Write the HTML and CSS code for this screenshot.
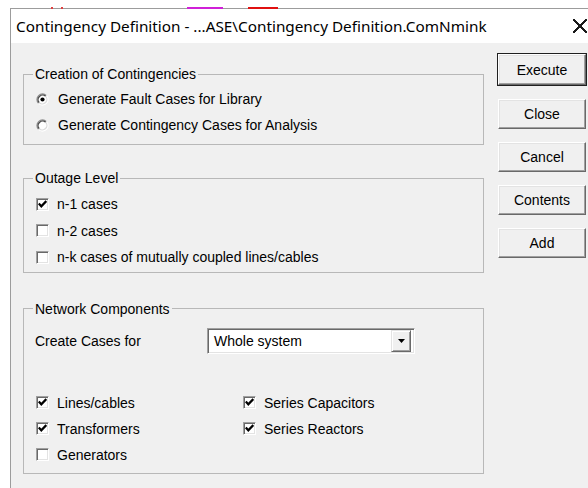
FILE: index.html
```html
<!DOCTYPE html>
<html lang="en">
<head>
<meta charset="utf-8">
<title>Contingency Definition</title>
<link rel="stylesheet" href="styles.css">
</head>
<body>
<div class="desk">
  <span class="mark mark-tick" style="left:51px"></span>
  <span class="mark mark-tick" style="left:61px"></span>
  <span class="mark mark-magenta"></span>
  <span class="mark mark-red"></span>

  <div class="window">
    <div class="titlebar">
      <span class="title">Contingency Definition - ...ASE\Contingency Definition.ComNmink</span>
      <span class="close-btn"><span class="close-cross" aria-label="Close"></span></span>
    </div>

    <div class="client">
      <div class="groups">
        <fieldset class="group group-creation">
          <legend>Creation of Contingencies</legend>
          <div class="row">
            <svg class="radio" width="13" height="13" viewBox="0 0 13 13">
              <circle cx="6.5" cy="6.5" r="5.5" fill="#ffffff"/>
              <path d="M2.61 10.39 A5.5 5.5 0 0 1 10.39 2.61" fill="none" stroke="#8f8f8f" stroke-width="1.3"/>
              <path d="M10.39 2.61 A5.5 5.5 0 0 1 2.61 10.39" fill="none" stroke="#ffffff" stroke-width="1.3"/>
              <path d="M3.32 9.68 A4.5 4.5 0 0 1 9.68 3.32" fill="none" stroke="#4a4a4a" stroke-width="1.3"/>
              <path d="M9.68 3.32 A4.5 4.5 0 0 1 3.32 9.68" fill="none" stroke="#dcdcdc" stroke-width="1.3"/>
              <circle cx="6.5" cy="6.5" r="2.1" fill="#000000"/>
            </svg>
            <span class="label">Generate Fault Cases for Library</span>
          </div>
          <div class="row">
            <svg class="radio" width="13" height="13" viewBox="0 0 13 13">
              <circle cx="6.5" cy="6.5" r="5.5" fill="#ffffff"/>
              <path d="M2.61 10.39 A5.5 5.5 0 0 1 10.39 2.61" fill="none" stroke="#8f8f8f" stroke-width="1.3"/>
              <path d="M10.39 2.61 A5.5 5.5 0 0 1 2.61 10.39" fill="none" stroke="#ffffff" stroke-width="1.3"/>
              <path d="M3.32 9.68 A4.5 4.5 0 0 1 9.68 3.32" fill="none" stroke="#4a4a4a" stroke-width="1.3"/>
              <path d="M9.68 3.32 A4.5 4.5 0 0 1 3.32 9.68" fill="none" stroke="#dcdcdc" stroke-width="1.3"/>
            </svg>
            <span class="label">Generate Contingency Cases for Analysis</span>
          </div>
        </fieldset>

        <fieldset class="group group-outage">
          <legend>Outage Level</legend>
          <div class="row">
            <span class="chk"><svg width="9" height="9" viewBox="0 0 9 9"><path d="M0.8 3.6 L3.3 6.3 L8.3 1.1" stroke="#000" stroke-width="2.2" fill="none"/></svg></span>
            <span class="label">n-1 cases</span>
          </div>
          <div class="row">
            <span class="chk"></span>
            <span class="label">n-2 cases</span>
          </div>
          <div class="row">
            <span class="chk"></span>
            <span class="label">n-k cases of mutually coupled lines/cables</span>
          </div>
        </fieldset>

        <fieldset class="group group-network">
          <legend>Network Components</legend>
          <div class="create-row">
            <span class="create-label">Create Cases for</span>
            <div class="combo">
              <span class="combo-text">Whole system</span>
              <span class="combo-btn"><svg width="7" height="4" viewBox="0 0 7 4"><path d="M0 0 H7 L3.5 4 Z" fill="#000"/></svg></span>
            </div>
          </div>
          <div class="comp-grid">
            <div class="row">
              <span class="chk"><svg width="9" height="9" viewBox="0 0 9 9"><path d="M0.8 3.6 L3.3 6.3 L8.3 1.1" stroke="#000" stroke-width="2.2" fill="none"/></svg></span>
              <span class="label">Lines/cables</span>
            </div>
            <div class="row">
              <span class="chk"><svg width="9" height="9" viewBox="0 0 9 9"><path d="M0.8 3.6 L3.3 6.3 L8.3 1.1" stroke="#000" stroke-width="2.2" fill="none"/></svg></span>
              <span class="label">Series Capacitors</span>
            </div>
            <div class="row">
              <span class="chk"><svg width="9" height="9" viewBox="0 0 9 9"><path d="M0.8 3.6 L3.3 6.3 L8.3 1.1" stroke="#000" stroke-width="2.2" fill="none"/></svg></span>
              <span class="label">Transformers</span>
            </div>
            <div class="row">
              <span class="chk"><svg width="9" height="9" viewBox="0 0 9 9"><path d="M0.8 3.6 L3.3 6.3 L8.3 1.1" stroke="#000" stroke-width="2.2" fill="none"/></svg></span>
              <span class="label">Series Reactors</span>
            </div>
            <div class="row">
              <span class="chk"></span>
              <span class="label">Generators</span>
            </div>
          </div>
        </fieldset>
      </div>

      <div class="buttons">
        <button class="btn btn-default">Execute</button>
        <button class="btn">Close</button>
        <button class="btn">Cancel</button>
        <button class="btn">Contents</button>
        <button class="btn">Add</button>
      </div>
    </div>
  </div>
</div>
</body>
</html>
```

FILE: styles.css
```css
html, body {
  margin: 0;
  padding: 0;
  background: #ffffff;
  overflow: hidden;
}

body {
  width: 588px;
  height: 488px;
  font-family: "Liberation Sans", Arial, sans-serif;
  font-size: 14px;
  color: #000;
}

.desk {
  position: relative;
  width: 588px;
  height: 488px;
  padding-top: 8px;
  box-sizing: border-box;
}

/* bits of the window behind, showing over the top edge */
.mark {
  position: absolute;
  top: 7px;
  height: 2px;
  z-index: 2;
}
.mark-tick {
  width: 2px;
  background: #e04040;
}
.mark-magenta {
  left: 187px;
  width: 36px;
  background: #d020d8;
}
.mark-red {
  left: 248px;
  width: 30px;
  background: #e01010;
}

.window {
  margin-left: 10px;
  width: 577px;
  border-top: 1px solid #9c9c9c;
  border-left: 1px solid #9c9c9c;
  height: 480px;
  background: #f0f0f0;
}

.titlebar {
  height: 34px;
  background: #ffffff;
  display: grid;
  grid-template-columns: 1fr 40px;
  align-items: center;
  padding-left: 5px;
}

.title {
  font-family: "Noto Sans", "Open Sans", sans-serif;
  font-size: 15.3px;
  color: #000;
  white-space: nowrap;
  overflow: hidden;
}

.close-btn {
  height: 34px;
  display: flex;
  align-items: center;
  justify-content: flex-end;
  padding-right: 1px;
}

/* two thin diagonals make the close cross */
.close-cross {
  display: block;
  width: 14px;
  height: 14px;
  background:
    linear-gradient(45deg, transparent 46%, #1a1a1a 46%, #1a1a1a 54%, transparent 54%),
    linear-gradient(-45deg, transparent 46%, #1a1a1a 46%, #1a1a1a 54%, transparent 54%);
}

.client {
  display: flex;
  padding: 11px 0 0 12px;
}

.groups {
  margin-top: 12px;
  width: 461px;
  display: flex;
  flex-direction: column;
}

.group {
  margin: 0;
  padding: 0 0 0 9px;
  border: 1px solid #b8b8b8;
  min-width: 0;
}

.group legend {
  padding: 0 2px;
  line-height: 16px;
  height: 16px;
}

.row {
  display: flex;
  align-items: center;
  height: 26px;
}

.label {
  white-space: nowrap;
}

.group-creation {
  padding-top: 4px;
  padding-bottom: 6px;
}
.group-creation .row {
  padding-left: 3px;
}
.group-creation .label {
  margin-left: 9px;
}

.group-outage {
  margin-top: 25px;
  padding-top: 5px;
  padding-bottom: 1px;
}
.group-outage .row {
  padding-left: 3px;
  height: 26.5px;
}

.group-network {
  margin-top: 28px;
  padding-top: 11px;
  padding-bottom: 5px;
}

.radio {
  display: block;
  flex: none;
}

.chk {
  flex: none;
  width: 13px;
  height: 13px;
  box-sizing: border-box;
  background: #fff;
  border-top: 1px solid #a0a0a0;
  border-left: 1px solid #a0a0a0;
  border-right: 1px solid #ffffff;
  border-bottom: 1px solid #ffffff;
  box-shadow: inset 1px 1px 0 #696969, inset -1px -1px 0 #e3e3e3;
  display: flex;
  align-items: center;
  justify-content: center;
  margin-right: 8px;
}
.chk svg {
  display: block;
}

.create-row {
  display: flex;
  align-items: center;
  height: 26px;
}
.create-label {
  padding-left: 2px;
  width: 172px;
}

.combo {
  width: 208px;
  height: 26px;
  box-sizing: border-box;
  background: #fff;
  border-top: 1px solid #a0a0a0;
  border-left: 1px solid #a0a0a0;
  border-right: 1px solid #ffffff;
  border-bottom: 1px solid #ffffff;
  box-shadow: inset 1px 1px 0 #696969, inset -1px -1px 0 #e3e3e3;
  display: flex;
  align-items: center;
  justify-content: space-between;
  padding: 2px 3px 2px 6px;
}

.combo-btn {
  width: 20px;
  height: 22px;
  box-sizing: border-box;
  background: #f0f0f0;
  border-top: 1px solid #e3e3e3;
  border-left: 1px solid #e3e3e3;
  border-right: 1px solid #696969;
  border-bottom: 1px solid #696969;
  box-shadow: inset 1px 1px 0 #ffffff, inset -1px -1px 0 #a0a0a0;
  display: flex;
  align-items: center;
  justify-content: center;
}
.combo-btn svg {
  display: block;
}

.comp-grid {
  margin-top: 36px;
  padding-left: 3px;
  display: grid;
  grid-template-columns: 207px 1fr;
}

.buttons {
  margin-left: 14px;
  width: 88px;
  display: flex;
  flex-direction: column;
}

.btn {
  font-family: "Liberation Sans", Arial, sans-serif;
  font-size: 14px;
  color: #000;
  height: 30px;
  margin: 0 0 13px 0;
  padding: 0;
  background: #f0f0f0;
  border-top: 1px solid #ffffff;
  border-left: 1px solid #ffffff;
  border-right: 1px solid #696969;
  border-bottom: 1px solid #696969;
  box-shadow: inset -1px -1px 0 #a0a0a0, inset 1px 1px 0 #e3e3e3;
}

.btn-default {
  height: 31px;
  margin-bottom: 14px;
  outline: 1px solid #202020;
  outline-offset: 0;
}
```
